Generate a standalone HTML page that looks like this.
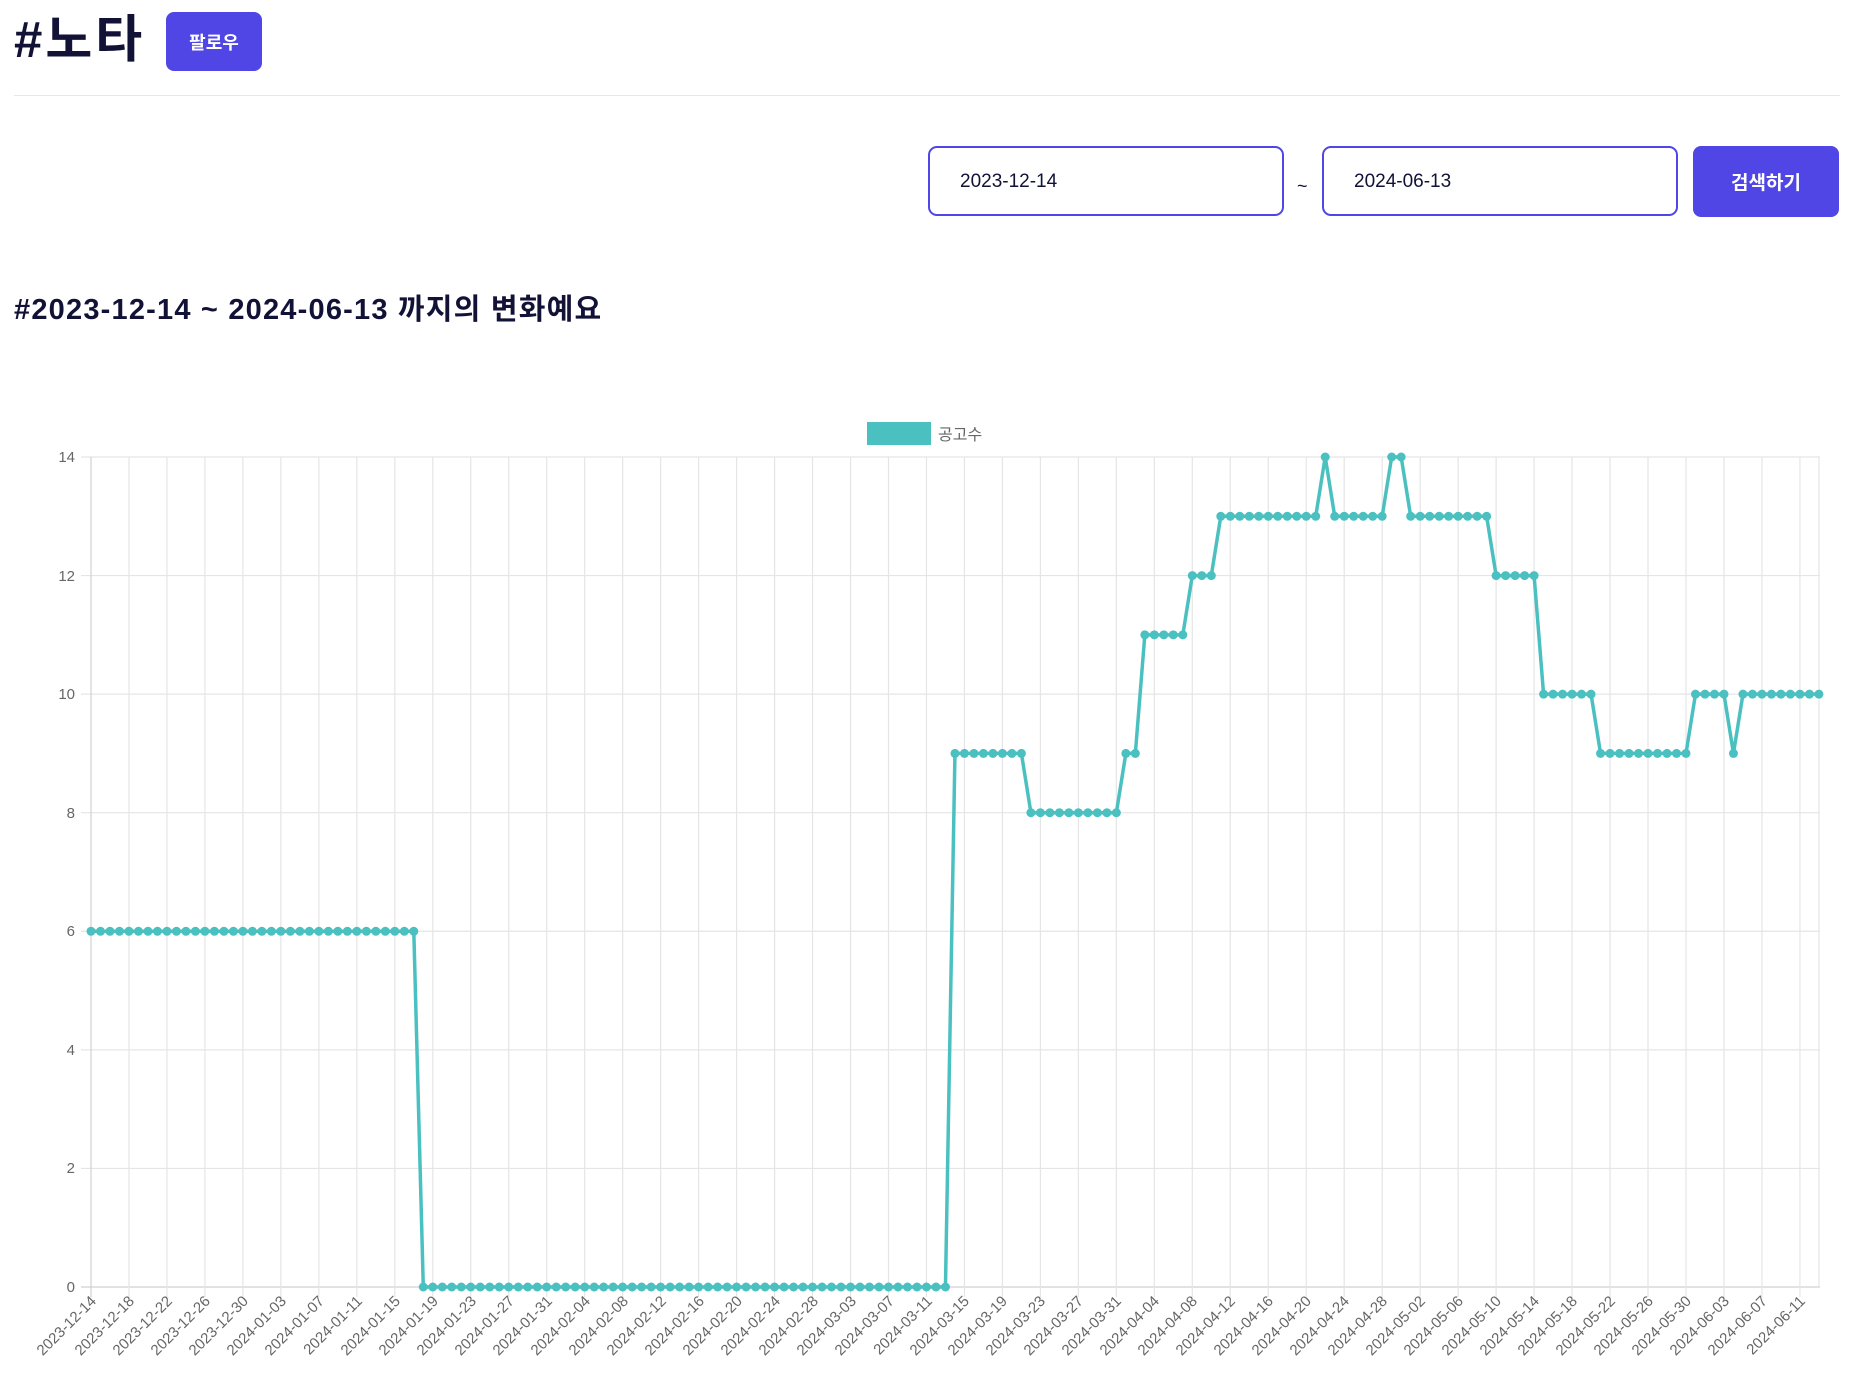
<!DOCTYPE html>
<html><head><meta charset="utf-8"><style>
body{margin:0;background:#fff;width:1856px;height:1400px;overflow:hidden;font-family:"Liberation Sans","Noto Sans CJK KR",sans-serif;color:#111236}
.t{position:absolute;left:14px;top:10px;font-size:51px;font-weight:bold;letter-spacing:3px;line-height:60px}
.fb{position:absolute;left:166px;top:12px;width:96px;height:59px;background:#4f46e5;border-radius:8px;color:#fff;font-size:18px;font-weight:bold;display:flex;align-items:center;justify-content:center}
.hr{position:absolute;left:14px;right:16px;top:95px;height:1px;background:#e8e8ec}
.in{position:absolute;top:146px;width:352px;height:66px;border:2.5px solid #4f46e5;border-radius:9px;font-size:19px;line-height:68px;padding-left:30px;box-sizing:content-box}
.sb{position:absolute;left:1693px;top:146px;width:146px;height:71px;background:#4f46e5;border-radius:8px;color:#fff;font-size:19px;font-weight:bold;display:flex;align-items:center;justify-content:center}
.h2{position:absolute;left:14px;top:286px;font-size:29px;font-weight:bold;letter-spacing:1.2px}
svg{position:absolute;left:0;top:0}
svg text{font-family:"Liberation Sans","Noto Sans CJK KR",sans-serif;fill:#666}
</style></head><body>
<div class="t">#노타</div>
<div class="fb">팔로우</div>
<div class="hr"></div>
<div class="in" style="left:928px;width:322px">2023-12-14</div>
<div style="position:absolute;left:1297px;top:176px;font-size:18px">~</div>
<div class="in" style="left:1322px;width:322px">2024-06-13</div>
<div class="sb">검색하기</div>
<div class="h2">#2023-12-14 ~ 2024-06-13 까지의 변화예요</div>
<svg width="1856" height="1400" id="s">
<rect x="867" y="422" width="64" height="23" fill="#4bc0c0"/>
<text x="938" y="440" font-size="16" fill="#555">공고수</text>
<g id="grid"></g>
<g font-size="15" text-anchor="end">
<text x="75" y="462">14</text><text x="75" y="581">12</text><text x="75" y="699">10</text><text x="75" y="818">8</text><text x="75" y="936">6</text><text x="75" y="1055">4</text><text x="75" y="1173">2</text><text x="75" y="1292">0</text>
</g>
<g font-size="15" text-anchor="end" id="xl">
<text transform="translate(97,1302) rotate(-45)">2023-12-14</text>
<text transform="translate(135,1302) rotate(-45)">2023-12-18</text>
<text transform="translate(173,1302) rotate(-45)">2023-12-22</text>
<text transform="translate(211,1302) rotate(-45)">2023-12-26</text>
<text transform="translate(249,1302) rotate(-45)">2023-12-30</text>
<text transform="translate(287,1302) rotate(-45)">2024-01-03</text>
<text transform="translate(325,1302) rotate(-45)">2024-01-07</text>
<text transform="translate(363,1302) rotate(-45)">2024-01-11</text>
<text transform="translate(401,1302) rotate(-45)">2024-01-15</text>
<text transform="translate(439,1302) rotate(-45)">2024-01-19</text>
<text transform="translate(477,1302) rotate(-45)">2024-01-23</text>
<text transform="translate(515,1302) rotate(-45)">2024-01-27</text>
<text transform="translate(553,1302) rotate(-45)">2024-01-31</text>
<text transform="translate(591,1302) rotate(-45)">2024-02-04</text>
<text transform="translate(629,1302) rotate(-45)">2024-02-08</text>
<text transform="translate(667,1302) rotate(-45)">2024-02-12</text>
<text transform="translate(705,1302) rotate(-45)">2024-02-16</text>
<text transform="translate(743,1302) rotate(-45)">2024-02-20</text>
<text transform="translate(781,1302) rotate(-45)">2024-02-24</text>
<text transform="translate(819,1302) rotate(-45)">2024-02-28</text>
<text transform="translate(857,1302) rotate(-45)">2024-03-03</text>
<text transform="translate(895,1302) rotate(-45)">2024-03-07</text>
<text transform="translate(933,1302) rotate(-45)">2024-03-11</text>
<text transform="translate(970,1302) rotate(-45)">2024-03-15</text>
<text transform="translate(1008,1302) rotate(-45)">2024-03-19</text>
<text transform="translate(1046,1302) rotate(-45)">2024-03-23</text>
<text transform="translate(1084,1302) rotate(-45)">2024-03-27</text>
<text transform="translate(1122,1302) rotate(-45)">2024-03-31</text>
<text transform="translate(1160,1302) rotate(-45)">2024-04-04</text>
<text transform="translate(1198,1302) rotate(-45)">2024-04-08</text>
<text transform="translate(1236,1302) rotate(-45)">2024-04-12</text>
<text transform="translate(1274,1302) rotate(-45)">2024-04-16</text>
<text transform="translate(1312,1302) rotate(-45)">2024-04-20</text>
<text transform="translate(1350,1302) rotate(-45)">2024-04-24</text>
<text transform="translate(1388,1302) rotate(-45)">2024-04-28</text>
<text transform="translate(1426,1302) rotate(-45)">2024-05-02</text>
<text transform="translate(1464,1302) rotate(-45)">2024-05-06</text>
<text transform="translate(1502,1302) rotate(-45)">2024-05-10</text>
<text transform="translate(1540,1302) rotate(-45)">2024-05-14</text>
<text transform="translate(1578,1302) rotate(-45)">2024-05-18</text>
<text transform="translate(1616,1302) rotate(-45)">2024-05-22</text>
<text transform="translate(1654,1302) rotate(-45)">2024-05-26</text>
<text transform="translate(1692,1302) rotate(-45)">2024-05-30</text>
<text transform="translate(1730,1302) rotate(-45)">2024-06-03</text>
<text transform="translate(1768,1302) rotate(-45)">2024-06-07</text>
<text transform="translate(1806,1302) rotate(-45)">2024-06-11</text>
</g>
<g id="data"></g>
</svg>
<script>
var ns="http://www.w3.org/2000/svg",g=document.getElementById("grid"),d=document.getElementById("data");
function el(p,t,a){var e=document.createElementNS(ns,t);for(var k in a)e.setAttribute(k,a[k]);p.appendChild(e);return e;}
var X=function(i){return 91+i*9.494},Y=function(v){return 1287-v*59.286};
for(var v=0;v<=14;v+=2)el(g,"line",{x1:81,x2:1820,y1:Y(v),y2:Y(v),stroke:v==0?"#d0d0d0":"#e5e5e5","stroke-width":1.2});
for(var k=0;k<=45;k++){var x=X(k*4);el(g,"line",{x1:x,x2:x,y1:457,y2:1297,stroke:k==0?"#d0d0d0":"#e5e5e5","stroke-width":1.2});}
el(g,"line",{x1:1819,x2:1819,y1:457,y2:1287,stroke:"#e5e5e5","stroke-width":1.2});
var segs=[[0,34,6],[35,90,0],[91,98,9],[99,108,8],[109,110,9],[111,115,11],[116,118,12],[119,129,13],[130,130,14],[131,136,13],[137,138,14],[139,147,13],[148,152,12],[153,158,10],[159,168,9],[169,172,10],[173,173,9],[174,182,10]];
var vals=[];segs.forEach(function(s){for(var i=s[0];i<=s[1];i++)vals[i]=s[2];});
var pts=vals.map(function(v,i){return X(i)+","+Y(v)}).join(" ");
el(d,"polyline",{points:pts,fill:"none",stroke:"#4bc0c0","stroke-width":3.5,"stroke-linejoin":"round"});
vals.forEach(function(v,i){el(d,"circle",{cx:X(i),cy:Y(v),r:4.5,fill:"#4bc0c0"});});
</script>
</body></html>
